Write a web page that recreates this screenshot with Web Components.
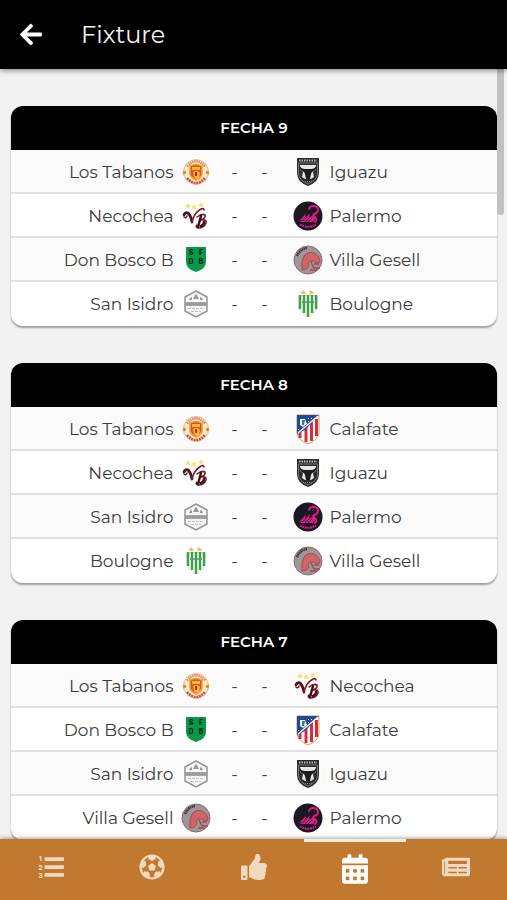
<!DOCTYPE html>
<html lang="es">
<head>
<meta charset="utf-8">
<meta name="viewport" content="width=device-width, initial-scale=1">
<title>Fixture</title>
<style>
    body {
        margin: 0;
        background: #f2f2f2;
        color: #3c3c3c;
        font-family: Montserrat, Inter, sans-serif;
        font-size: 17px;
    }
</style>
</head>
<body>
<fixture-app>
    <app-header slot="header">Fixture</app-header>
    <match-day>
        <span slot="title">FECHA 9</span>
        <match-row home="Los Tabanos" away="Iguazu"></match-row>
        <match-row home="Necochea" away="Palermo"></match-row>
        <match-row home="Don Bosco B" away="Villa Gesell"></match-row>
        <match-row home="San Isidro" away="Boulogne"></match-row>
    </match-day>
    <match-day>
        <span slot="title">FECHA 8</span>
        <match-row home="Los Tabanos" away="Calafate"></match-row>
        <match-row home="Necochea" away="Iguazu"></match-row>
        <match-row home="San Isidro" away="Palermo"></match-row>
        <match-row home="Boulogne" away="Villa Gesell"></match-row>
    </match-day>
    <match-day>
        <span slot="title">FECHA 7</span>
        <match-row home="Los Tabanos" away="Necochea"></match-row>
        <match-row home="Don Bosco B" away="Calafate"></match-row>
        <match-row home="San Isidro" away="Iguazu"></match-row>
        <match-row home="Villa Gesell" away="Palermo"></match-row>
    </match-day>
    <tab-bar slot="tabs">
        <tab-link icon="list" label="Posiciones" href="#posiciones"></tab-link>
        <tab-link icon="ball" label="Goleadores" href="#goleadores"></tab-link>
        <tab-link icon="thumb" label="Fair play" href="#fairplay"></tab-link>
        <tab-link icon="calendar" label="Fixture" href="#fixture" active></tab-link>
        <tab-link icon="news" label="Noticias" href="#noticias"></tab-link>
    </tab-bar>
</fixture-app>

<script>
// team crests, all on a 28x28 grid
const crests = {
    "Los Tabanos": `
        <path fill="#d8a040" d="M2 11l4-1v9l-4-1-1-3.500zM26 11l-4-1v9l4-1 1-3.500z"/>
        <circle cx="14" cy="14" r="12.500" fill="#fbe9cd" stroke="#dfae6a" stroke-width=".8"/>
        <path d="M5 8.500Q14-2 23 8.500" fill="none" stroke="#d98a62" stroke-width="2.500" stroke-dasharray="1.500 .7"/>
        <path d="M5 20Q14 30 23 20" fill="none" stroke="#cf4a3c" stroke-width="2.500" stroke-dasharray="2 .7"/>
        <path fill="#dc5136" stroke="#e9a52d" stroke-width="1.500" d="M8 8q6-3 12 0v8q-1 4-6 6-5-2-6-6z"/>
        <path fill="#f6bb2d" d="M10 9h8v3h-8zM11 14l2-1h3l2 2-1 5-3 1-2-2z"/>
        <path fill="#b32b20" d="M13 14h2v4h-2z"/>
        <circle cx="2.500" cy="14.500" r="1.700" fill="#d58a37"/><circle cx="25.500" cy="14.500" r="1.700" fill="#d58a37"/>`,
    "Iguazu": `
        <path fill="#2b2b2b" d="M3 0h22v15q0 9-11 13Q3 24 3 15z"/>
        <path fill="none" stroke="#777" d="M4.500 5h19v10q0 7-9.500 11-9.500-4-9.500-11z"/>
        <path stroke="#b5b5b5" stroke-width="2" stroke-dasharray="1.500 1" d="M5 2.500h18"/>
        <path fill="#e6e6e6" d="M6 7h16v5l-3 2 1 5-3 2h-6l-3-2 1-5-3-2z"/>
        <path fill="#1c1c1c" d="M6 8q1 3 5 3h6q4 0 5-3 1 5-4 6l-1 2-1 5h-4l-1-5-1-2q-5-1-4-6z"/>
        <path stroke="#888" stroke-dasharray="1 1" d="M9 23.500h10"/>`,
    "Necochea": `
        <path fill="#f6e070" d="M6 1l1 2 2 .2-1.500 1.300.5 2-2-1-2 1 .5-2L3 3.200 5 3zM12 2l1 2 2 .2-1.500 1.300.5 2-2-1-2 1 .5-2L9 4.200l2-.2zM19 0l1 2 2 .2-1.500 1.300.5 2-2-1-2 1 .5-2L16 2.200l2-.2z"/>
        <path fill="none" stroke="#4a1420" stroke-width="2.800" stroke-linecap="round" d="M2 13q1-3 4-2 3 3 4 9"/>
        <path fill="none" stroke="#7a1c2e" stroke-width="1.600" stroke-linecap="round" d="M2 15q2 2 3-1M10 20q2-9 9-13 3-1 3 1M15 15q5-4 8-2 1 3-4 5 6-1 5 3-2 5-8 5-3-1-1-3M18 18h3"/>
        <path fill="none" stroke="#40101c" stroke-width="2.500" stroke-linecap="round" d="M19 14l-3 11M22 20q0 3-3 4"/>`,
    "Palermo": `
        <circle cx="14" cy="14" r="14.500" fill="#1c1720"/>
        <path fill="none" stroke="#d51c87" stroke-width="2" stroke-linecap="round" d="M15 7q1-3 4-3 5 0 5 4 0 3-4 4-2 2 1 3 3 3 0 5"/>
        <path fill="#d51c87" d="M4 19q4-2 8-8l-1 4q3-1 5-4l-1 4q3 0 5-2 3 4-1 7H6l2-2z"/>
        <path stroke="#1c1720" stroke-width=".7" d="M8 19l5-4M11 19.500l5-4M14 20l4-4"/>
        <path fill="none" stroke="#d51c87" stroke-width="2" stroke-dasharray="2 .6" d="M6 22.500q8 4.500 16 0"/>`,
    "Don Bosco B": `
        <path fill="#07984a" d="M4 1h20v15q0 7-10 10Q4 23 4 16z"/>
        <g fill="#06251a" font-family="Inter, sans-serif" font-size="7" font-weight="800" text-anchor="middle">
            <text x="9" y="9">S</text><text x="19" y="9">F</text>
            <text x="9" y="18">D</text><text x="19" y="18">B</text>
        </g>`,
    "Villa Gesell": `
        <circle cx="14" cy="14" r="14" fill="#9d9797" stroke="#9c6270"/>
        <path fill="#d0646b" stroke="#a64953" d="M8 24q-1-9 2-14 4-5 10-3 6 3 6 9l-4 1q-1-3-5-2-4 1-2 5-2 4-7 4z"/>
        <path fill="none" stroke="#a64953" stroke-width="1.500" d="M17 16l3 6h6M16 24h7M20 18h5"/>
        <path fill="none" stroke="#3d393c" stroke-width="2.500" stroke-dasharray="1.500 .5" d="M3 10Q6 3 13 2"/>`,
    "San Isidro": `
        <path fill="#f5f5f5" stroke="#949494" stroke-width="1.500" d="M14 1l11 6v14l-11 6-11-6V7z"/>
        <path fill="#999" d="M13 5l1-1 1 1 2 4h-6zM8 8l2-1v3H7zM20 8l-2-1v3h3z"/>
        <path fill="#a4a4a4" d="M2 12h24v4H2z"/>
        <path stroke="#888" stroke-dasharray="2 1" d="M4 14h20"/>
        <path stroke="#c0c0c0" stroke-dasharray="3 1" d="M6 18.500h16M9 21.500h10"/>`,
    "Boulogne": `
        <path fill="#f0bd66" d="M9 0l1 1.500L12 2l-1 2H8L7 2zM17 0l1 1.500 2 .5-1 2h-3l-1-2z"/>
        <path fill="#fff" stroke="#d9dbbc" d="M5 6q9-2 18 0v12q-2 6-9 9-7-3-9-9z"/>
        <path fill="none" stroke="#3fa14b" stroke-width="2.500" d="M6 5v14M10 5v18M14 5v22M18 5v18M22 5v14"/>
        <path stroke="#668f68" stroke-width="1.500" d="M8 12h12"/>`,
    "Calafate": `
        <path fill="#fff" stroke="#d6a04b" stroke-width="1" d="M3 0h22v18q-1 7-11 11Q4 25 3 18z"/>
        <path stroke="#d62c3d" stroke-width="3" d="M6 15v8M12 12v15M17.500 7v19M22.500 4v17"/>
        <path fill="#204b94" d="M3 0h22L11 15l-8 4z"/>
        <path stroke="#fff" stroke-width="1.200" d="M24 1L4 18"/>
        <path fill="#e9f5f2" d="M6 4h5l2 5-4 3-3-2z"/>
        <path fill="#388264" d="M8 5h3l-1 5H8z"/>
        <path fill="#fff" d="M14 3h1v1h-1zM17 3h1v1h-1zM14 6h1v1h-1zM4 14h1v1H4z"/>`
};

const icons = {
    list: `<svg viewBox="0 0 512 512" width="26" height="26">
        <rect x="128" y="64" width="384" height="74" rx="16"/><rect x="128" y="220" width="384" height="74" rx="16"/><rect x="128" y="376" width="384" height="74" rx="16"/>
        <g font-family="Roboto, sans-serif" font-size="140" font-weight="900" text-anchor="middle"><text x="52" y="136">1</text><text x="52" y="306">2</text><text x="52" y="476">3</text></g></svg>`,
    ball: `<svg viewBox="0 0 512 512" width="26" height="26"><path d="M504 256c0 136.967-111.033 248-248 248S8 392.967 8 256 119.033 8 256 8s248 111.033 248 248zm-48 0l-.003-.282-26.064 22.741-62.679-58.500 16.454-84.355 34.303 3.072c-24.889-34.216-60.004-60.089-100.709-73.141l13.651 31.939L256 139l-74.953-41.525 13.651-31.939c-40.631 13.028-75.780 38.870-100.709 73.141l34.565-3.073 16.192 84.355-62.678 58.500-26.064-22.741-.003.282c0 43.015 13.497 83.952 38.472 117.991l7.704-33.897 85.138 10.447 36.301 77.826-29.902 17.786c40.202 13.122 84.290 13.148 124.572 0l-29.902-17.786 36.301-77.826 85.138-10.447 7.704 33.897C442.503 339.952 456 299.015 456 256zm-248.102 69.571l-29.894-91.312L256 177.732l77.996 56.527-29.622 91.312h-96.476z"/></svg>`,
    thumb: `<svg viewBox="0 0 512 512" width="26" height="26"><path d="M104 224H24c-13.255 0-24 10.745-24 24v240c0 13.255 10.745 24 24 24h80c13.255 0 24-10.745 24-24V248c0-13.255-10.745-24-24-24zM64 472c-13.255 0-24-10.745-24-24s10.745-24 24-24 24 10.745 24 24-10.745 24-24 24zM384 81.452c0 42.416-25.970 66.208-33.277 94.548h101.723c33.397 0 59.397 27.746 59.553 58.098.084 17.938-7.546 37.249-19.439 49.197l-.110.110c9.836 23.337 8.237 56.037-9.308 79.469 8.681 25.895-.069 57.704-16.382 74.757 4.298 17.598 2.244 32.575-6.148 44.632C440.202 511.587 389.616 512 346.839 512l-2.845-.001c-48.287-.017-87.806-17.598-119.560-31.725-15.957-7.099-36.821-15.887-52.651-16.178-6.540-.120-11.783-5.457-11.783-11.998v-213.770c0-3.200 1.282-6.271 3.558-8.521 39.614-39.144 56.648-80.587 89.117-113.111 14.804-14.832 20.188-37.236 25.393-58.902C282.515 39.293 291.817 0 312 0c24 0 72 8 72 81.452z"/></svg>`,
    calendar: `<svg viewBox="0 0 448 512" width="26" height="30"><path fill-rule="evenodd" d="M0 464c0 26.500 21.500 48 48 48h352c26.500 0 48-21.500 48-48V192H0zM76 256h40q12 0 12 12v40q0 12-12 12H76q-12 0-12-12v-40q0-12 12-12zM204 256h40q12 0 12 12v40q0 12-12 12h-40q-12 0-12-12v-40q0-12 12-12zM332 256h40q12 0 12 12v40q0 12-12 12h-40q-12 0-12-12v-40q0-12 12-12zM76 384h40q12 0 12 12v40q0 12-12 12H76q-12 0-12-12v-40q0-12 12-12zM204 384h40q12 0 12 12v40q0 12-12 12h-40q-12 0-12-12v-40q0-12 12-12zM332 384h40q12 0 12 12v40q0 12-12 12h-40q-12 0-12-12v-40q0-12 12-12zM400 64h-48V16c0-8.800-7.200-16-16-16h-32c-8.800 0-16 7.200-16 16v48H160V16c0-8.800-7.200-16-16-16h-32c-8.800 0-16 7.200-16 16v48H48C21.500 64 0 85.500 0 112v48h448v-48c0-26.500-21.500-48-48-48z"/></svg>`,
    news: `<svg viewBox="0 0 576 512" width="28" height="26"><path fill-rule="evenodd" d="M552 64H88c-13 0-24 11-24 24v8H24c-13 0-24 11-24 24v272c0 31 25 56 56 56h472c26 0 48-22 48-48V88c0-13-11-24-24-24zM56 400a8 8 0 0 1-8-8V144h16v248a8 8 0 0 1-8 8zM128 352h176v32H128zM336 352h176v32H336zM128 256h176v32H128zM336 256h176v32H336zM128 128h384v64H128z"/></svg>`
};

function attach(element, html) {
    let template = document.createElement('template');
    template.innerHTML = html;
    element.attachShadow({mode: 'open'});
    element.shadowRoot.appendChild(template.content.cloneNode(true));
}

class FixtureApp extends HTMLElement {
    constructor() {
        super();
        attach(this, `
<style>
    :host {
        display: flex;
        flex-direction: column;
        height: 100vh;
    }
    .view {
        flex: 1;
        min-height: 0;
        position: relative;
    }
    main {
        box-sizing: border-box;
        height: 100%;
        overflow-y: auto;
        scrollbar-width: none;
        display: flex;
        flex-direction: column;
        gap: 37px;
        padding: 37px 10px 0 11px;
    }
    .thumb {
        position: absolute;
        top: 0;
        right: 3px;
        width: 7px;
        height: 19%;
        background: #c1c1c1;
        border-radius: 0 0 3px 3px;
    }
</style>
<slot name="header"></slot>
<div class="view">
    <main><slot></slot></main>
    <div class="thumb"></div>
</div>
<slot name="tabs"></slot>
`);
    }
    connectedCallback() {
        let main = this.shadowRoot.querySelector('main');
        let thumb = this.shadowRoot.querySelector('.thumb');
        main.addEventListener('scroll', () => {
            thumb.style.top = (main.scrollTop / main.scrollHeight * 100) + '%';
        });
    }
}

class AppHeader extends HTMLElement {
    constructor() {
        super();
        attach(this, `
<style>
    :host {
        display: flex;
        align-items: center;
        gap: 29px;
        height: 69px;
        padding: 0 10px;
        background: #000;
        color: #f2f2f2;
        box-shadow: 0 2px 5px rgba(0, 0, 0, 0.4);
        position: relative;
        z-index: 1;
    }
    button {
        display: flex;
        justify-content: center;
        width: 42px;
        padding: 8px 0;
        border: 0;
        background: none;
        color: #fff;
    }
    h1 {
        margin: 0;
        font-size: 24px;
        font-weight: 400;
        line-height: 32px;
    }
</style>
<button type="button" aria-label="Volver">
    <svg viewBox="0 0 448 512" width="22" height="25" fill="currentColor"><path d="M257.500 445.100l-22.200 22.200c-9.400 9.400-24.600 9.400-33.900 0L7 273c-9.400-9.400-9.400-24.600 0-33.900L201.400 44.700c9.400-9.400 24.600-9.400 33.900 0l22.200 22.200c9.500 9.500 9.300 25-.4 34.300L136.600 216H424c13.300 0 24 10.700 24 24v32c0 13.300-10.700 24-24 24H136.600l120.500 114.800c9.800 9.300 10 24.800.4 34.300z"/></svg>
</button>
<h1><slot></slot></h1>
`);
    }
}

class MatchDay extends HTMLElement {
    constructor() {
        super();
        attach(this, `
<style>
    :host {
        display: block;
        flex-shrink: 0;
        background: #fff;
        border-radius: 12px;
        overflow: hidden;
        box-shadow: 0 2px 2px rgba(0, 0, 0, 0.35);
    }
    h2 {
        margin: 0;
        background: #000;
        color: #fff;
        font-size: 15px;
        font-weight: 600;
        line-height: 44px;
        text-align: center;
    }
    ::slotted(match-row:nth-of-type(odd)) {
        background: #fafafa;
    }
    ::slotted(match-row:last-of-type) {
        border-bottom-color: transparent;
    }
</style>
<section>
    <h2><slot name="title"></slot></h2>
    <slot></slot>
</section>
`);
    }
}

class MatchRow extends HTMLElement {
    constructor() {
        super();
        attach(this, `
<style>
    :host {
        display: grid;
        grid-template-columns: 1fr 84px 1fr;
        align-items: center;
        box-sizing: border-box;
        height: 44px;
        padding: 2px 5px 0 0;
        border-bottom: 2px solid #e2e2e2;
    }
    .team {
        display: flex;
        align-items: center;
        gap: 8px;
        line-height: 24px;
        white-space: nowrap;
    }
    .home {
        justify-content: flex-end;
    }
    .score {
        display: flex;
        padding-left: 10px;
    }
    .score span {
        width: 30px;
        text-align: center;
    }
</style>
<div class="team home"><span class="name"></span><team-crest></team-crest></div>
<div class="score"><span>-</span><span>-</span></div>
<div class="team away"><team-crest></team-crest><span class="name"></span></div>
`);
    }
    connectedCallback() {
        for (let side of ['home', 'away']) {
            let team = this.getAttribute(side);
            this.shadowRoot.querySelector(`.${side} .name`).textContent = team;
            this.shadowRoot.querySelector(`.${side} team-crest`).setAttribute('team', team);
        }
    }
}

class TeamCrest extends HTMLElement {
    static observedAttributes = ['team'];
    constructor() {
        super();
        attach(this, `
<style>
    :host {
        display: block;
        flex: none;
    }
    svg {
        display: block;
        overflow: visible;
    }
</style>
<svg viewBox="0 0 28 28" width="28" height="28" aria-hidden="true"></svg>
`);
    }
    attributeChangedCallback(name, oldValue, team) {
        this.shadowRoot.querySelector('svg').innerHTML = crests[team];
    }
}

class TabBar extends HTMLElement {
    constructor() {
        super();
        attach(this, `
<style>
    :host {
        display: block;
        position: relative;
        z-index: 1;
        background: #c17930;
        box-shadow: 0 -1px 4px rgba(0, 0, 0, 0.35);
    }
    nav {
        display: flex;
        height: 61px;
    }
    ::slotted(tab-link) {
        flex: 1;
    }
</style>
<nav><slot></slot></nav>
`);
    }
}

class TabLink extends HTMLElement {
    constructor() {
        super();
        attach(this, `
<style>
    :host {
        display: block;
    }
    a {
        display: flex;
        justify-content: center;
        align-items: center;
        box-sizing: border-box;
        height: 100%;
        padding-bottom: 6px;
        color: #f0d9c2;
    }
    svg {
        fill: currentColor;
    }
    :host([active]) a {
        border-top: 3px solid #f7ebdf;
        padding-bottom: 4px;
        color: #fff;
    }
</style>
<a></a>
`);
    }
    connectedCallback() {
        let link = this.shadowRoot.querySelector('a');
        link.href = this.getAttribute('href');
        link.setAttribute('aria-label', this.getAttribute('label'));
        link.innerHTML = icons[this.getAttribute('icon')];
    }
}

window.customElements.define('team-crest', TeamCrest);
window.customElements.define('match-row', MatchRow);
window.customElements.define('match-day', MatchDay);
window.customElements.define('app-header', AppHeader);
window.customElements.define('tab-link', TabLink);
window.customElements.define('tab-bar', TabBar);
window.customElements.define('fixture-app', FixtureApp);
</script>
</body>
</html>
